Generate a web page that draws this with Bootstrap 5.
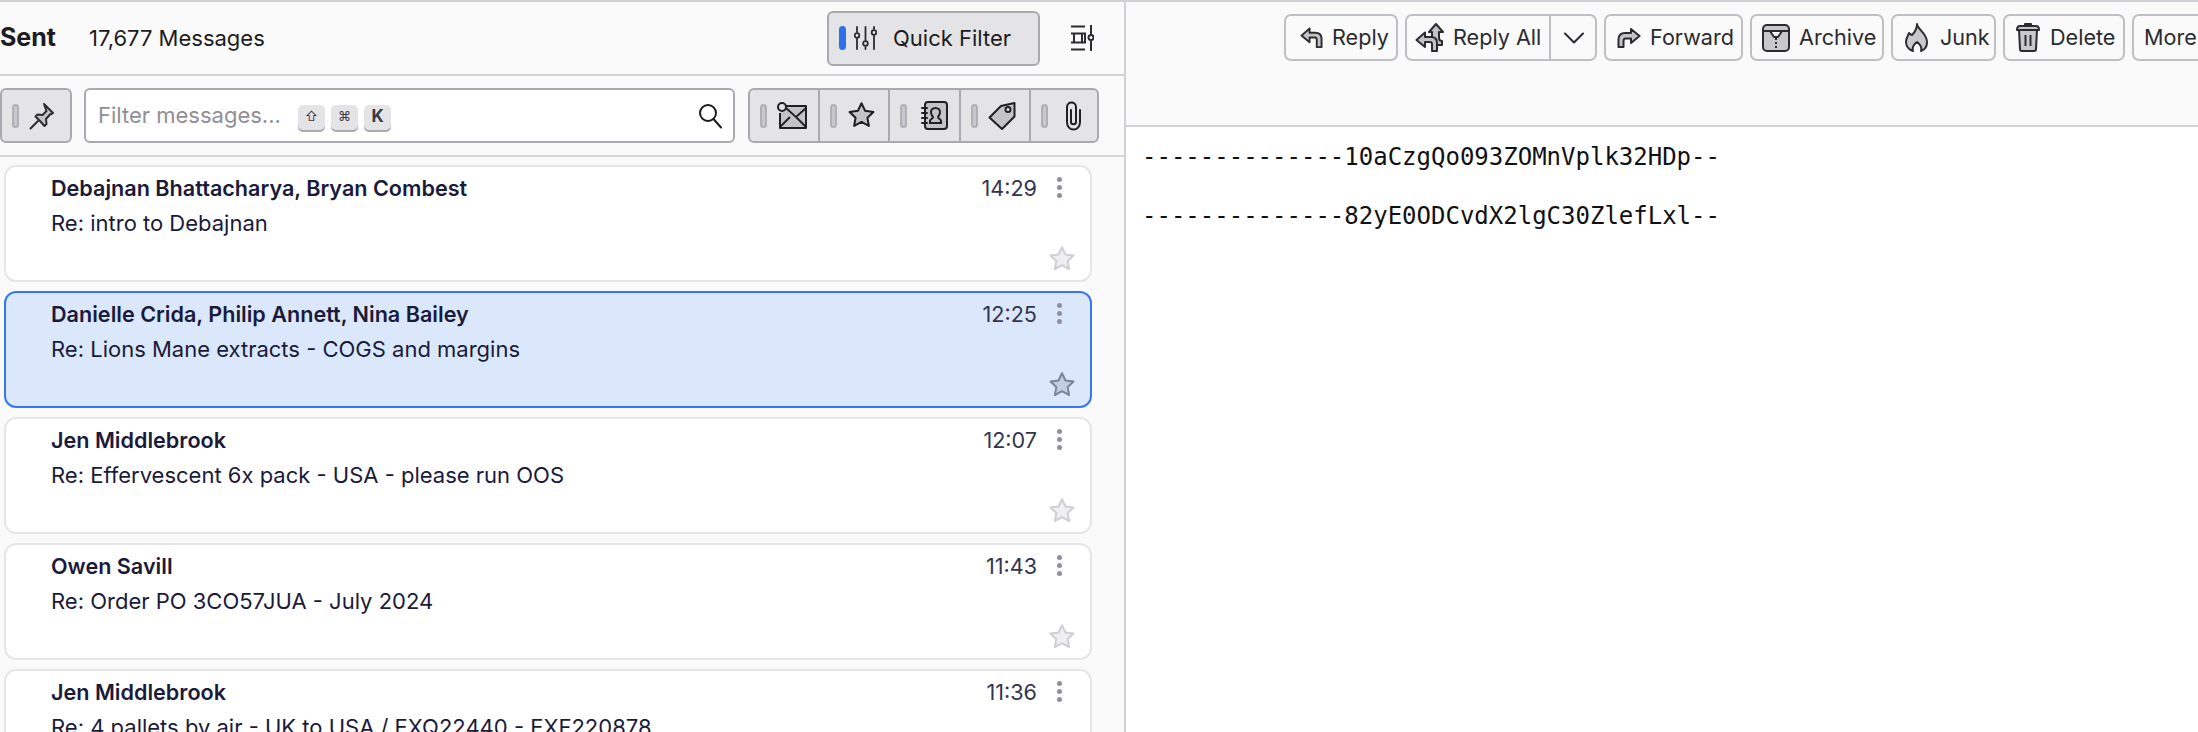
<!DOCTYPE html>
<html lang="en">
<head>
  <meta charset="UTF-8">
  <title>Sent - Mail</title>
  <link rel="stylesheet" href="https://cdn.jsdelivr.net/npm/bootstrap@5.3.0/dist/css/bootstrap.min.css">
  <style>
    html, body { height: 100%; }
    body {
      background: #fafafa;
      color: #1c1b22;
      font-family: Inter, "Liberation Sans", sans-serif;
      font-size: 22px;
      overflow: hidden;
      border-top: 2px solid #d2d2d6;
    }
    .app-shell { height: 730px; }
    .list-pane { width: 1126px; flex: none; border-right: 2px solid #d2d2d6; }
    .folder-bar { height: 74px; flex: none; border-bottom: 2px solid #d2d2d6; padding-right: 30px; }
    .folder-name { font-weight: 700; font-size: 25px; width: 89px; }
    .pill-btn {
      background: #e4e4e7;
      border: 2px solid #a9a9b0;
      border-radius: 6px;
    }
    .quick-btn { width: 213px; height: 55px; padding-left: 10px; }
    .tick {
      width: 7px; height: 24px; flex: none;
      border-radius: 4px;
      background: #c9c9cd;
      border: 2px solid #b0b0b6;
    }
    .tick-on { background: #2f6fe8; border-color: #2f6fe8; }
    .layout-icon { margin-left: 30px; }
    .filter-bar { height: 81px; flex: none; border-bottom: 2px solid #d8d8dc; padding-top: 12px; }
    .pin-btn { width: 72px; height: 55px; padding-left: 10px; gap: 10px; }
    .filter-box {
      width: 651px; height: 55px; margin-left: 12px; margin-right: 13px;
      background: #fff;
      border: 2px solid #a9a9b0;
      border-radius: 6px;
      padding: 0 11px 0 12px;
    }
    .filter-hint { color: #8f8f95; width: 200px; flex: none; }
    .key-chip {
      width: 27px; height: 25px; margin-right: 6px; margin-top: 3px;
      background: #e4e4e7;
      border-radius: 5px;
      box-shadow: 0 2px 0 #a9a9b0;
      font-size: 13px;
      color: #3a3a40;
    }
    .key-k { font-weight: 700; font-size: 17px; }
    .filter-group { width: 351px; height: 55px; overflow: hidden; }
    .filter-cell { width: 70.2px; flex: none; height: 100%; padding-left: 10px; gap: 10px; border-right: 2px solid #a9a9b0; }
    .filter-cell:last-child { border-right: 0; }
    .mail-list { padding: 8px 0 0 4px; gap: 9px; width: 1092px; min-height: 0; }
    .mail-card {
      height: 117px; flex: none;
      background: #fff;
      border: 2px solid #e6e6e9;
      border-radius: 12px;
      padding: 5px 27px 0 45px;
      color: #1a1a3a;
      position: relative;
    }
    .mail-card.is-picked { background: #dbe8fc; border-color: #3578f0; }
    .mail-from { font-weight: 600; height: 32px; line-height: 32px; font-size: 21.6px; }
    .mail-subject { height: 36px; line-height: 36px; margin-top: 1px; font-size: 22px; }
    .mail-time { width: 60px; text-align: right; color: #34344f; margin-right: 20px; }
    .mail-star { position: absolute; right: 14px; bottom: 7px; }
    .kebab { width: 6px; padding-top: 5px; }
    .kebab i { display: block; width: 5px; height: 5px; border-radius: 50%; background: #8f8f9d; margin-bottom: 3px; }
    .read-pane { min-width: 0; }
    .read-bar { height: 125px; flex: none; border-bottom: 2px solid #d2d2d6; padding: 12px 0 0 158px; gap: 7px; overflow: hidden; }
    .act-btn {
      height: 47px; flex: none;
      border: 2px solid #c0c0c4;
      border-radius: 7px;
      font-size: 21.6px;
      white-space: nowrap;
      color: #2a2a2e;
      padding-left: 14px;
      gap: 9px;
    }
    .act-reply { width: 114px; }
    .act-all { width: 192px; padding-left: 8px; gap: 8px; }
    .act-forward { width: 139px; padding-left: 11px; gap: 9px; }
    .act-archive { width: 134px; padding-left: 10px; gap: 9px; }
    .act-junk { width: 105px; padding-left: 12px; gap: 12px; }
    .act-delete { width: 122px; padding-left: 11px; gap: 10px; }
    .act-more { width: 120px; padding-left: 10px; }
    .reply-split { width: 2px; height: 100%; background: #c0c0c4; flex: none; margin-left: 0; }
    .msg-body { background: #fff; flex: 1; padding: 15px 0 0 16px; font-family: "DejaVu Sans Mono", monospace; font-size: 24px; color: #111; }
    .msg-body p { margin: 0 0 28px; line-height: 31px; }
  </style>
</head>
<body>
  <svg width="0" height="0" class="position-absolute">
    <symbol id="star" viewBox="0 0 28 28">
      <path d="M14 2.200l3.500 7.300 8 1.100-5.800 5.500 1.400 7.900-7.100-3.800-7.100 3.800 1.400-7.900-5.800-5.500 8-1.100z" stroke-width="2" stroke-linejoin="round"/>
    </symbol>
  </svg>

  <div class="app-shell d-flex">
    <!-- Message list side -->
    <div class="list-pane d-flex flex-column">
      <div class="folder-bar d-flex align-items-center">
        <span class="folder-name">Sent</span>
        <span class="flex-grow-1">17,677 Messages</span>
        <div class="pill-btn quick-btn d-flex align-items-center">
          <span class="tick tick-on"></span>
          <svg class="ms-2" width="23" height="24" viewBox="0 0 23 24" fill="none" stroke="#2b2b30" stroke-width="1.800" stroke-linecap="round">
            <path d="M3 1v5M3 13v10M11.500 1v13M11.500 21v2M20 1v2M20 10v13"/>
            <circle cx="3" cy="9.500" r="2.300"/><circle cx="11.500" cy="17.500" r="2.300"/><circle cx="20" cy="6.500" r="2.300"/>
          </svg>
          <span class="ms-3">Quick Filter</span>
        </div>
        <svg class="layout-icon" width="24" height="26" viewBox="0 0 24 26" fill="none" stroke="#2b2b30" stroke-width="2">
          <path d="M1 1.500h14M1 24.500h14M1 8.500h14v9H1M4 8.500v9M12 8.500v9"/>
          <path d="M21 0v9M21 16v10"/><circle cx="21" cy="12.500" r="2.500"/>
        </svg>
      </div>

      <div class="filter-bar d-flex align-items-start">
        <div class="pill-btn pin-btn d-flex align-items-center">
          <span class="tick"></span>
          <svg width="26" height="28" viewBox="0 0 26 28" fill="#c4c4c8" stroke="#2b2b30" stroke-width="2" stroke-linejoin="round">
            <path d="M15 2l9 9-3 1.500-4 4.500.5 5-2 2-4.500-5-4.500-4.500 2-2 5 .5 4-4z"/>
            <path d="M9 19l-7.500 7.500" fill="none" stroke-linecap="round"/>
          </svg>
        </div>
        <div class="filter-box d-flex align-items-center">
          <span class="filter-hint">Filter messages...</span>
          <span class="key-chip d-flex align-items-center justify-content-center">&#8679;</span>
          <span class="key-chip d-flex align-items-center justify-content-center">&#8984;</span>
          <span class="key-chip key-k d-flex align-items-center justify-content-center">K</span>
          <svg class="ms-auto" width="24" height="26" viewBox="0 0 24 26" fill="none" stroke="#1c1b22" stroke-width="2" stroke-linecap="round">
            <circle cx="10" cy="10" r="8"/><path d="M15.500 16l7.500 8.500"/>
          </svg>
        </div>
        <div class="pill-btn filter-group d-flex">
          <div class="filter-cell d-flex align-items-center">
            <span class="tick"></span>
            <svg width="30" height="27" viewBox="0 0 30 27" fill="none" stroke="#1f1f24" stroke-width="2" stroke-linejoin="round">
              <path d="M9 4h20v22H3V11" fill="#c4c4c8"/>
              <path d="M9 6l10 9 10-9M3 25l10-10M29 25L19 15" stroke-width="1.800"/>
              <circle cx="5" cy="5" r="4" fill="#e4e4e7"/>
            </svg>
          </div>
          <div class="filter-cell d-flex align-items-center">
            <span class="tick"></span>
            <svg width="29" height="29" fill="#c4c4c8" stroke="#1f1f24"><use href="#star"/></svg>
          </div>
          <div class="filter-cell d-flex align-items-center">
            <span class="tick"></span>
            <svg class="ms-1" width="27" height="29" viewBox="0 0 27 29" fill="none" stroke="#1f1f24" stroke-width="2" stroke-linecap="round">
              <rect x="4" y="1" width="22" height="27" rx="3" fill="#c4c4c8"/>
              <path d="M1 7h5M1 12h5M1 17h5M1 22h5"/>
              <path d="M9 22v-2c0-2 3-2 3-4-1.500-1.500-2-3-2-5 0-2 1.500-4 4.500-4s4.500 2 4.500 4c0 2-.5 3.500-2 5 0 2 3 2 3 4v2z"/>
            </svg>
          </div>
          <div class="filter-cell d-flex align-items-center">
            <span class="tick"></span>
            <svg width="28" height="30" viewBox="0 0 28 30" fill="#c4c4c8" stroke="#1f1f24" stroke-width="2" stroke-linejoin="round">
              <path d="M1.500 16.500L13 5 26.500 2v13.500L14 28z"/>
              <circle cx="20" cy="8.500" r="2.500" fill="#e4e4e7"/>
            </svg>
          </div>
          <div class="filter-cell d-flex align-items-center">
            <span class="tick"></span>
            <svg class="ms-2" width="15" height="30" viewBox="0 0 15 30" fill="none" stroke="#1f1f24" stroke-width="2" stroke-linecap="round">
              <path d="M5 9v12c0 3 5 3 5 0V6C10 0 1 0 1 6v15c0 10 13 10 13 0V9"/>
            </svg>
          </div>
        </div>
      </div>

      <div class="mail-list d-flex flex-column overflow-hidden flex-grow-1">
        <div class="mail-card">
          <div class="d-flex align-items-start">
            <div class="mail-from flex-grow-1">Debajnan Bhattacharya, Bryan Combest</div>
            <div class="mail-time mail-from fw-normal">14:29</div>
            <div class="kebab"><i></i><i></i><i></i></div>
          </div>
          <div class="mail-subject">Re: intro to Debajnan</div>
          <svg class="mail-star" width="28" height="28" fill="#efeff1" stroke="#cfcfd4"><use href="#star"/></svg>
        </div>
        <div class="mail-card is-picked">
          <div class="d-flex align-items-start">
            <div class="mail-from flex-grow-1">Danielle Crida, Philip Annett, Nina Bailey</div>
            <div class="mail-time mail-from fw-normal">12:25</div>
            <div class="kebab"><i></i><i></i><i></i></div>
          </div>
          <div class="mail-subject">Re: Lions Mane extracts - COGS and margins</div>
          <svg class="mail-star" width="28" height="28" fill="#c0cde2" stroke="#7d8496"><use href="#star"/></svg>
        </div>
        <div class="mail-card">
          <div class="d-flex align-items-start">
            <div class="mail-from flex-grow-1">Jen Middlebrook</div>
            <div class="mail-time mail-from fw-normal">12:07</div>
            <div class="kebab"><i></i><i></i><i></i></div>
          </div>
          <div class="mail-subject">Re: Effervescent 6x pack - USA - please run OOS</div>
          <svg class="mail-star" width="28" height="28" fill="#efeff1" stroke="#cfcfd4"><use href="#star"/></svg>
        </div>
        <div class="mail-card">
          <div class="d-flex align-items-start">
            <div class="mail-from flex-grow-1">Owen Savill</div>
            <div class="mail-time mail-from fw-normal">11:43</div>
            <div class="kebab"><i></i><i></i><i></i></div>
          </div>
          <div class="mail-subject">Re: Order PO 3CO57JUA - July 2024</div>
          <svg class="mail-star" width="28" height="28" fill="#efeff1" stroke="#cfcfd4"><use href="#star"/></svg>
        </div>
        <div class="mail-card">
          <div class="d-flex align-items-start">
            <div class="mail-from flex-grow-1">Jen Middlebrook</div>
            <div class="mail-time mail-from fw-normal">11:36</div>
            <div class="kebab"><i></i><i></i><i></i></div>
          </div>
          <div class="mail-subject">Re: 4 pallets by air - UK to USA / EXQ22440 - EXF220878</div>
        </div>
      </div>
    </div>

    <!-- Message reader side -->
    <div class="read-pane d-flex flex-column flex-grow-1">
      <div class="read-bar d-flex align-items-start">
        <div class="act-btn act-reply d-flex align-items-center">
          <svg width="23" height="22" viewBox="0 0 24 23" fill="#c4c4c8" stroke="#2b2b30" stroke-width="2" stroke-linejoin="round">
            <path d="M1.500 9L10 1.500V6h6c4 0 6.500 2.500 6.500 6.500V21h-5v-7.500c0-1.500-.5-2.500-2-2.500H10v5z"/>
          </svg>
          <span>Reply</span>
        </div>
        <div class="act-btn act-all d-flex align-items-center">
          <svg width="30" height="29" viewBox="0 0 30 29" fill="#c4c4c8" stroke="#2b2b30" stroke-width="2" stroke-linejoin="round">
            <path d="M14 9l7-8 7 8h-4v6c0 2 1 3 3 3v4h-5c-3-2-5-5-5-8V9z"/>
            <path d="M1.500 17L10 9.500V14h6c4 0 6 2.500 6 6v8h-5v-7c0-1.500-.5-2-2-2h-5v5z"/>
          </svg>
          <span>Reply All</span>
          <span class="reply-split"></span>
          <svg class="ms-1" width="22" height="12" viewBox="0 0 22 12" fill="none" stroke="#2b2b30" stroke-width="2" stroke-linecap="round" stroke-linejoin="round">
            <path d="M2 1.500l9 9 9-9"/>
          </svg>
        </div>
        <div class="act-btn act-forward d-flex align-items-center">
          <svg width="24" height="20" viewBox="0 0 24 20" fill="#c4c4c8" stroke="#2b2b30" stroke-width="2" stroke-linejoin="round">
            <path d="M22.500 8L14 1v4H8C4 5 1.500 7.500 1.500 11.500V19h5v-6c0-1.500.5-2.500 2-2.500H14V15z"/>
          </svg>
          <span>Forward</span>
        </div>
        <div class="act-btn act-archive d-flex align-items-center">
          <svg width="28" height="28" viewBox="0 0 28 28" fill="none" stroke="#2b2b30" stroke-width="2" stroke-linejoin="round">
            <rect x="1" y="1" width="26" height="26" rx="4" fill="#c9c9cd"/>
            <path d="M1 7h26M8 7l4 6h4l4-6" fill="#fafafa"/>
            <path d="M14 14v12" stroke-dasharray="2 2"/>
          </svg>
          <span>Archive</span>
        </div>
        <div class="act-btn act-junk d-flex align-items-center">
          <svg width="23" height="29" viewBox="0 0 23 29" fill="#c9c9cd" stroke="#2b2b30" stroke-width="2" stroke-linejoin="round">
            <path d="M12 1c0 5 10 9 10 18 0 5-3 8-6 9 1-3 0-6-4-9-4 3-5 6-4 9-3-1-7-4-7-9 0-4 2-6 3-9 1 1 2 2 3 2 3-3 5-7 5-11z"/>
          </svg>
          <span>Junk</span>
        </div>
        <div class="act-btn act-delete d-flex align-items-center">
          <svg width="24" height="29" viewBox="0 0 24 29" fill="#c9c9cd" stroke="#2b2b30" stroke-width="2" stroke-linejoin="round">
            <path d="M3 7h18l-1 19c0 1-1 2-2 2H6c-1 0-2-1-2-2z"/>
            <path d="M1 7c0-3 1-4 3-4h16c2 0 3 1 3 4zM9 3V1h6v2M9.500 12v11M14.500 12v11"/>
          </svg>
          <span>Delete</span>
        </div>
        <div class="act-btn act-more d-flex align-items-center">More</div>
      </div>
      <div class="msg-body">
        <p>--------------10aCzgQo093ZOMnVplk32HDp--</p>
        <p>--------------82yE0ODCvdX2lgC30ZlefLxl--</p>
      </div>
    </div>
  </div>
</body>
</html>
